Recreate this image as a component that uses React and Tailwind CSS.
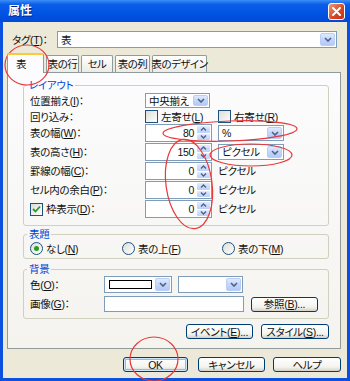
import React from 'react';

const Key = ({ k }) => (
  <span>
    (<span className="underline">{k}</span>)
  </span>
);

const Arrow = () => (
  <div className="w-[15px] h-full shrink-0 flex items-center justify-center rounded-[2px] border border-[#bccdf5] bg-[linear-gradient(180deg,#e1eafe_0%,#c2d5fc_50%,#b4c9f7_100%)]">
    <svg width="8" height="5" viewBox="0 0 8 5">
      <path d="M1 1 L4 4 L7 1" fill="none" stroke="#4d6185" strokeWidth="1.6" />
    </svg>
  </div>
);

const Combo = ({ value, className = '' }) => (
  <div className={`flex items-center bg-white border border-[#7f9db9] p-[1px] ${className}`}>
    <div className="flex-1 pl-[2px] leading-[12px] whitespace-nowrap overflow-hidden">{value}</div>
    <Arrow />
  </div>
);

const Spin = ({ value }) => (
  <div className="w-[67px] h-[18px] flex bg-white border border-[#7f9db9] p-[1px]">
    <div className="flex-1 text-right pr-[3px] leading-[14px]">{value}</div>
    <div className="w-[13px] flex flex-col gap-[1px]">
      <div className="flex-1 flex items-center justify-center rounded-[1px] bg-[linear-gradient(180deg,#e1eafe,#bcd0f9)]">
        <svg width="7" height="4" viewBox="0 0 7 4">
          <path d="M1 3.5 L3.5 1 L6 3.5" fill="none" stroke="#4d6185" strokeWidth="1.4" />
        </svg>
      </div>
      <div className="flex-1 flex items-center justify-center rounded-[1px] bg-[linear-gradient(180deg,#e1eafe,#bcd0f9)]">
        <svg width="7" height="4" viewBox="0 0 7 4">
          <path d="M1 0.5 L3.5 3 L6 0.5" fill="none" stroke="#4d6185" strokeWidth="1.4" />
        </svg>
      </div>
    </div>
  </div>
);

const Check = ({ checked }) => (
  <div className="w-[13px] h-[13px] shrink-0 border border-[#1c5180] bg-[linear-gradient(135deg,#dcdcd7,#ffffff)] flex items-center justify-center">
    {checked && (
      <svg width="9" height="8" viewBox="0 0 9 8">
        <path d="M1 4 L3.5 6.5 L8 1.5" fill="none" stroke="#21a121" strokeWidth="1.8" />
      </svg>
    )}
  </div>
);

const Radio = ({ checked }) => (
  <div className="w-[13px] h-[13px] shrink-0 rounded-full border border-[#1c5180] bg-[linear-gradient(135deg,#dcdcd7,#ffffff)] flex items-center justify-center">
    {checked && <div className="w-[5px] h-[5px] rounded-full bg-[#21a121]" />}
  </div>
);

const Btn = ({ children, className = '', def }) => (
  <div
    className={`flex items-center justify-center whitespace-nowrap rounded-[3px] border border-[#003c74] bg-[linear-gradient(180deg,#ffffff_0%,#f3f3ef_70%,#d6d0c5_100%)] leading-[12px] ${
      def ? 'shadow-[inset_0_0_0_1px_#cee7ff,inset_0_0_0_2px_#98b8ea]' : ''
    } ${className}`}
  >
    {children}
  </div>
);

const Row = ({ label, children, className = '' }) => (
  <div className={`flex items-center ${className}`}>
    <div className="w-[115px] shrink-0 leading-[12px] whitespace-nowrap">{label}</div>
    {children}
  </div>
);

const Tab = ({ children, w }) => (
  <div
    className={`${w} h-[17px] flex items-center justify-center whitespace-nowrap tracking-[-0.5px] rounded-t-[2px] border border-b-0 border-[#919b9c] bg-[linear-gradient(180deg,#ffffff,#ecebe6)] leading-[12px]`}
  >
    {children}
  </div>
);

export default function App() {
  return (
    <div className="relative w-[350px] h-[381px] flex flex-col bg-[#0b50df] text-[10.5px] tracking-[-0.3px] text-[#111] font-['Liberation_Sans','Noto_Sans_CJK_JP',sans-serif] [font-feature-settings:'palt']">
      <div className="h-[22px] shrink-0 flex items-center justify-between pl-[8px] pr-[5px] bg-[linear-gradient(180deg,#3d8ff8_0%,#0a5ee8_20%,#0054e3_60%,#0049d9_100%)]">
        <span className="text-white font-bold text-[12px] tracking-normal leading-[14px] [text-shadow:1px_1px_0_#0a1e80]">属性</span>
        <div className="w-[17px] h-[17px] rounded-[3px] border border-white bg-[linear-gradient(135deg,#f09a7c,#d8431f_60%,#c4341a)] flex items-center justify-center">
          <svg width="9" height="9" viewBox="0 0 9 9">
            <path d="M1 1 L8 8 M8 1 L1 8" stroke="white" strokeWidth="2" strokeLinecap="round" />
          </svg>
        </div>
      </div>

      <div className="flex-1 mx-[3px] mb-[3px] bg-[#ece9d8] flex flex-col">
        <div className="mt-[9px] h-[17px] flex items-center">
          <div className="w-[54px] pl-[9px] leading-[12px] whitespace-nowrap">
            タグ<Key k="T" />：
          </div>
          <Combo value="表" className="w-[280px] h-[17px]" />
        </div>

        <div className="mt-[5px] pl-[4px] flex items-end gap-[2px]">
          <div className="relative z-10 -mb-[1px] w-[37px] h-[20px] flex items-start pt-[3px] pl-[8px] rounded-t-[2px] border border-b-0 border-[#919b9c] border-t-[#ffc83c] border-t-2 bg-[#fcfcfe] leading-[12px]">
            表
          </div>
          <Tab w="w-[33px]">表の行</Tab>
          <Tab w="w-[32px]">セル</Tab>
          <Tab w="w-[35px]">表の列</Tab>
          <Tab w="w-[55px]">表のデザイン</Tab>
        </div>

        <div className="ml-[4px] w-[334px] h-[277px] border border-[#919b9c] bg-[linear-gradient(180deg,#fcfcfe,#f4f3ee)] pl-[15px] pr-[11px] flex flex-col">
          <fieldset className="mt-[5px] border border-[#d0d0bf] rounded-[3px] p-0">
            <legend className="ml-[3px] px-[2px] text-[#0046d5] leading-[14px]">レイアウト</legend>
            <div className="pl-[6px] pt-[1px] pb-[7px] flex flex-col">
              <Row label={<>位置揃え<Key k="I" />：</>} className="h-[15px]">
                <Combo value="中央揃え" className="w-[65px] h-[15px]" />
              </Row>
              <Row label="回り込み：" className="h-[13px] mt-[2px]">
                <div className="w-[73px] flex items-center gap-[3px] leading-[12px]">
                  <Check />
                  <span>左寄せ<Key k="L" /></span>
                </div>
                <div className="flex items-center gap-[3px] leading-[12px]">
                  <Check />
                  <span>右寄せ<Key k="R" /></span>
                </div>
              </Row>
              <Row label={<>表の幅<Key k="W" />：</>} className="h-[18px] mt-[1px]">
                <Spin value="80" />
                <Combo value="%" className="ml-[6px] w-[66px] h-[16px]" />
              </Row>
              <Row label={<>表の高さ<Key k="H" />：</>} className="h-[18px] mt-[1px]">
                <Spin value="150" />
                <Combo value="ピクセル" className="ml-[6px] w-[66px] h-[16px]" />
              </Row>
              <Row label={<>罫線の幅<Key k="C" />：</>} className="h-[18px] mt-[1px]">
                <Spin value="0" />
                <span className="ml-[6px] leading-[12px]">ピクセル</span>
              </Row>
              <Row label={<>セル内の余白<Key k="P" />：</>} className="h-[18px] mt-[1px]">
                <Spin value="0" />
                <span className="ml-[6px] leading-[12px]">ピクセル</span>
              </Row>
              <Row
                label={
                  <span className="flex items-center gap-[3px]">
                    <Check checked />
                    <span>枠表示<Key k="D" />：</span>
                  </span>
                }
                className="h-[18px] mt-[1px]"
              >
                <Spin value="0" />
                <span className="ml-[6px] leading-[12px]">ピクセル</span>
              </Row>
            </div>
          </fieldset>

          <fieldset className="mt-[1px] border border-[#d0d0bf] rounded-[3px] p-0">
            <legend className="ml-[3px] px-[2px] text-[#0046d5] leading-[14px]">表題</legend>
            <div className="pl-[6px] pt-[1px] pb-[3px] h-[17px] flex items-center leading-[12px]">
              <div className="w-[92px] flex items-center gap-[3px]">
                <Radio checked />
                <span>なし<Key k="N" /></span>
              </div>
              <div className="w-[100px] flex items-center gap-[3px]">
                <Radio />
                <span>表の上<Key k="F" /></span>
              </div>
              <div className="flex items-center gap-[3px]">
                <Radio />
                <span>表の下<Key k="M" /></span>
              </div>
            </div>
          </fieldset>

          <fieldset className="mt-[3px] border border-[#d0d0bf] rounded-[3px] p-0">
            <legend className="ml-[3px] px-[2px] text-[#0046d5] leading-[14px]">背景</legend>
            <div className="pl-[6px] pt-[0px] pb-[6px] flex flex-col">
              <div className="h-[17px] flex items-center">
                <div className="w-[74px] leading-[12px]">色<Key k="O" />：</div>
                <div className="w-[68px] h-[17px] flex items-center bg-white border border-[#7f9db9] p-[1px]">
                  <div className="flex-1 px-[3px]">
                    <div className="h-[9px] border border-black bg-white" />
                  </div>
                  <Arrow />
                </div>
                <Combo value="" className="ml-[6px] w-[65px] h-[17px]" />
              </div>
              <div className="h-[16px] mt-[3px] flex items-center">
                <div className="w-[74px] leading-[12px]">画像<Key k="G" />：</div>
                <div className="w-[140px] h-[16px] bg-white border border-[#7f9db9]" />
                <Btn className="ml-[7px] w-[67px] h-[15px]">
                  参照<Key k="B" />...
                </Btn>
              </div>
            </div>
          </fieldset>

          <div className="mt-[5px] flex justify-end gap-[8px]">
            <Btn className="w-[67px] h-[15px]">
              イベント<Key k="E" />...
            </Btn>
            <Btn className="w-[68px] h-[15px]">
              スタイル<Key k="S" />...
            </Btn>
          </div>
        </div>

        <div className="mt-[8px] pr-[6px] flex justify-end">
          <Btn def className="w-[65px] h-[15px]">OK</Btn>
          <Btn className="ml-[10px] w-[67px] h-[15px]">キャンセル</Btn>
          <Btn className="ml-[8px] w-[68px] h-[15px]">ヘルプ</Btn>
        </div>
      </div>

      <svg className="absolute inset-0 pointer-events-none" width="350" height="381" viewBox="0 0 350 381">
        <g fill="none" stroke="#e8383a" strokeWidth="1.2">
          <ellipse cx="27" cy="65" rx="22" ry="20" />
          <ellipse cx="230" cy="131" rx="67" ry="10" transform="rotate(-2 230 131)" />
          <ellipse cx="251" cy="155" rx="41" ry="11" />
          <ellipse cx="189" cy="184" rx="23" ry="45" transform="rotate(-8 189 184)" />
          <ellipse cx="154" cy="359" rx="24" ry="22" />
        </g>
      </svg>
    </div>
  );
}
